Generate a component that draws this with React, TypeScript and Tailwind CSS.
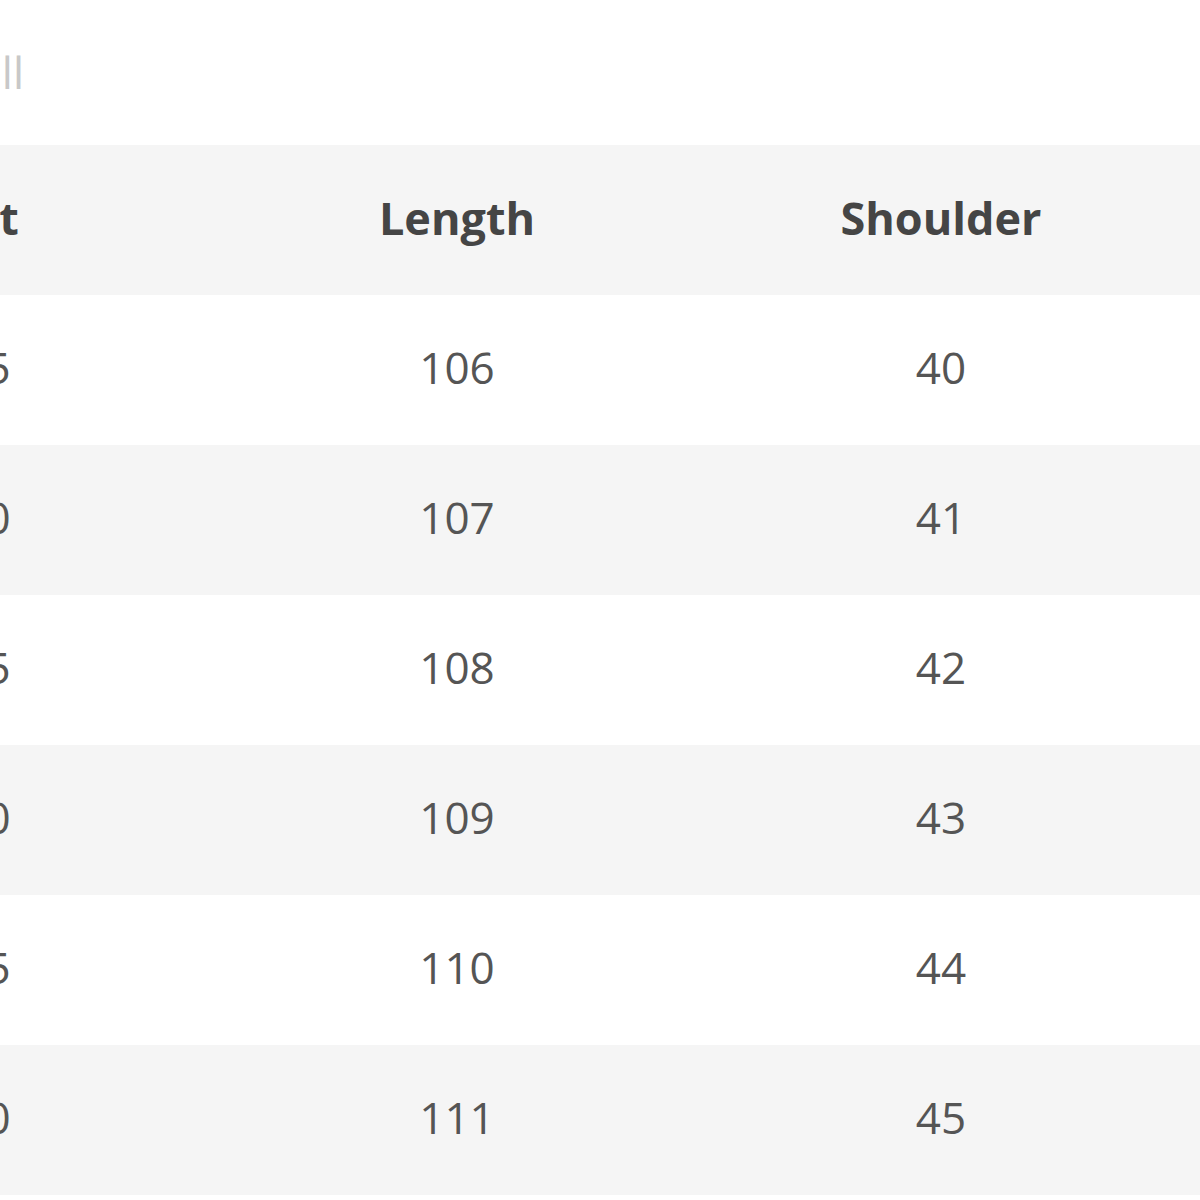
const rows = [
  { bust: '105', length: '106', shoulder: '40', sleeve: '60' },
  { bust: '110', length: '107', shoulder: '41', sleeve: '61' },
  { bust: '115', length: '108', shoulder: '42', sleeve: '62' },
  { bust: '120', length: '109', shoulder: '43', sleeve: '63' },
  { bust: '125', length: '110', shoulder: '44', sleeve: '64' },
  { bust: '130', length: '111', shoulder: '45', sleeve: '65' },
];

const headers = ['Bust', 'Length', 'Shoulder', 'Sleeve'];

export default function App() {
  return (
    <div className="w-[1200px] h-[1200px] overflow-hidden bg-white font-['Open_Sans',sans-serif]">
      <div className="h-[145px] flex items-center">
        <div className="w-[300px] -ml-[276px] text-right text-[44px] leading-none text-[#c8c8c8] pb-[2px]">
          Small
        </div>
      </div>

      <div className="-ml-[269px] w-[1936px]">
        <div className="grid grid-cols-4 h-[150px] items-center bg-[#f5f5f5] pb-[6px]">
          {headers.map((h, j) => (
            <div
              key={h}
              className={`text-center text-[45px] font-bold text-[#454545] leading-none ${j === 0 ? 'pr-[10px]' : ''}`}
            >
              {h}
            </div>
          ))}
        </div>

        {rows.map((r, i) => (
          <div
            key={r.length}
            className={`grid grid-cols-4 h-[150px] items-center pb-[7px] ${i % 2 === 1 ? 'bg-[#f5f5f5]' : 'bg-white'}`}
          >
            {[r.bust, r.length, r.shoulder, r.sleeve].map((v, j) => (
              <div key={j} className="text-center text-[44px] text-[#555] leading-none">
                {v}
              </div>
            ))}
          </div>
        ))}
      </div>
    </div>
  );
}
